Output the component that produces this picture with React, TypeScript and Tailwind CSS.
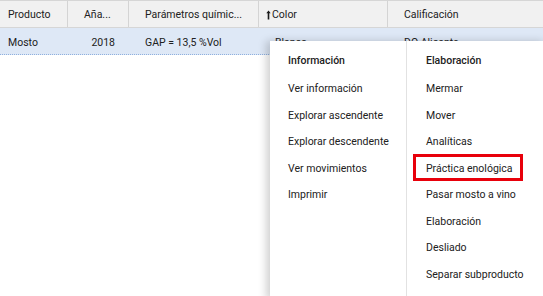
import React from 'react';

const COLUMNS = [
  { label: 'Producto', width: 'w-[68px]', pad: 'pl-[8px]' },
  { label: 'Aña...', width: 'w-[61px]', pad: 'pl-[16px]' },
  { label: 'Parámetros químic...', width: 'w-[130px]', pad: 'pl-[16px]' },
  { label: 'Color', width: 'w-[129px]', pad: 'pl-[7px]', sorted: true },
  { label: 'Calificación', width: 'flex-1', pad: 'pl-[16px]' },
];

const INFO_ITEMS = ['Ver información', 'Explorar ascendente', 'Explorar descendente', 'Ver movimientos', 'Imprimir'];

const ELAB_ITEMS = [
  'Mermar',
  'Mover',
  'Analíticas',
  'Práctica enológica',
  'Pasar mosto a vino',
  'Elaboración',
  'Desliado',
  'Separar subproducto',
];

const HIGHLIGHTED = 'Práctica enológica';

const SortArrow = () => (
  <svg width="5" height="10" viewBox="0 0 5 10" className="mr-[1px]">
    <path d="M2.5 0.5 L0.3 3.2 H1.7 V9.5 H3.3 V3.2 H4.7 Z" fill="#1a1a1a" />
  </svg>
);

const MenuColumn = ({ title, items, className }: { title: string; items: string[]; className: string }) => (
  <div className={className}>
    <div className="h-4 flex items-center font-medium text-[10.5px]">{title}</div>
    <div className="mt-[7px] flex flex-col">
      {items.map((item) => (
        <div key={item} className="relative h-[26.5px] flex items-center text-[10.5px]">
          {item === HIGHLIGHTED && (
            <span className="absolute left-[-13px] w-[110px] top-[-2px] bottom-[1px] border-[3px] border-[#e8000b]" />
          )}
          <span className="relative">{item}</span>
        </div>
      ))}
    </div>
  </div>
);

export default function App() {
  return (
    <div
      className="relative w-[543px] h-[296px] overflow-hidden bg-white text-[#212121]"
      style={{ fontFamily: 'Roboto, "Liberation Sans", sans-serif' }}
    >
      {/* Grid header */}
      <div className="flex h-[28px] bg-[#f1f1f1] border-t border-b border-[#d6d6d6]">
        {COLUMNS.map((col, i) => (
          <div
            key={col.label}
            className={`${col.width} ${col.pad} pt-[1px] flex items-center text-[10.5px] ${
              i < COLUMNS.length - 1 ? 'border-r border-[#d4d4d4]' : ''
            }`}
          >
            {col.sorted && <SortArrow />}
            {col.label}
          </div>
        ))}
      </div>

      {/* Selected row */}
      <div className="flex h-[27px] bg-[#dee8f6] border-b border-dotted border-[#8fb0de] text-[10.5px]">
        <div className="w-[68px] pl-[8px] pt-[3px] flex items-center">Mosto</div>
        <div className="w-[61px] pr-[14px] pt-[3px] flex items-center justify-end">2018</div>
        <div className="w-[130px] pl-[16px] pt-[3px] flex items-center">GAP = 13,5 %Vol</div>
        <div className="w-[129px] pl-[16px] pt-[3px] flex items-center">Blanco</div>
        <div className="flex-1 pl-[16px] pt-[3px] flex items-center">DO Alicante</div>
      </div>

      {/* Context menu */}
      <div className="absolute left-[270px] top-[41px] right-[-4px] bottom-[-4px] bg-white flex shadow-[-4px_0_8px_rgba(0,0,0,0.18)]">
        <MenuColumn
          title="Información"
          items={INFO_ITEMS}
          className="w-[137px] pl-[18px] pt-[12px] border-r border-[#e2e2e2]"
        />
        <MenuColumn title="Elaboración" items={ELAB_ITEMS} className="flex-1 pl-[19px] pt-[12px]" />
      </div>
    </div>
  );
}
